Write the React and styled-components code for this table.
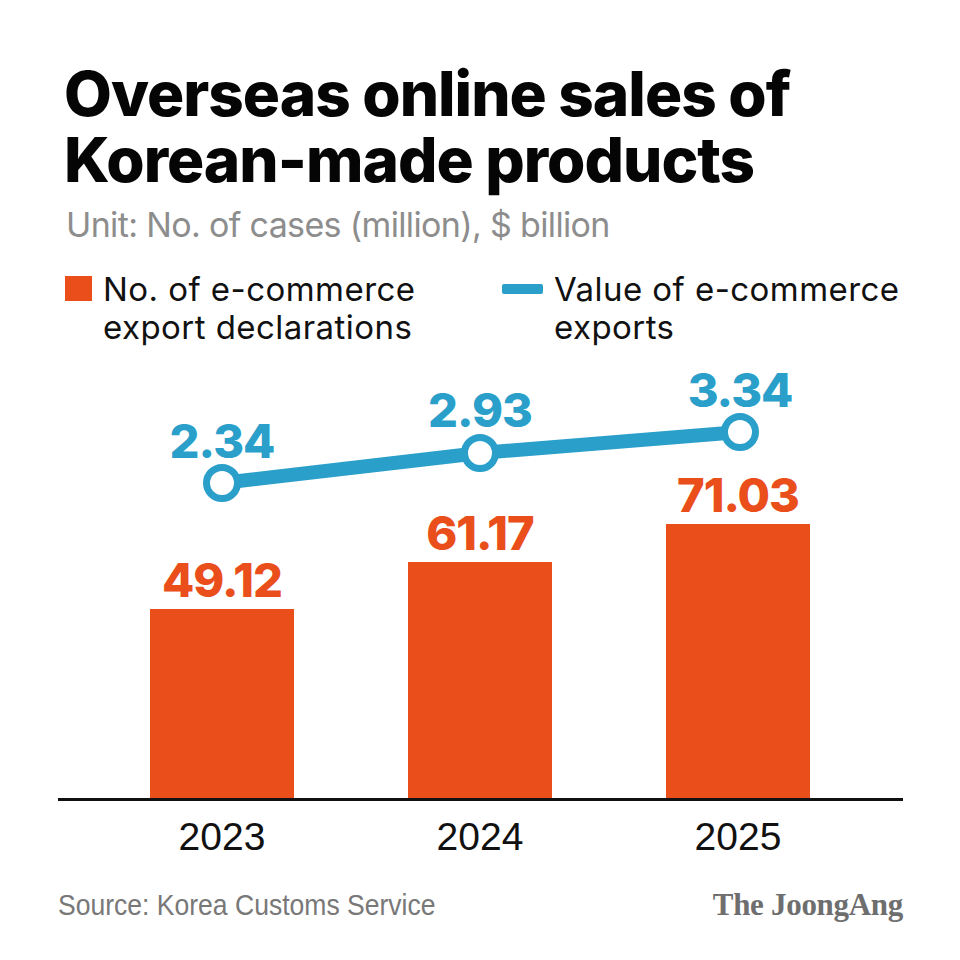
import React from "react";
import styled, { createGlobalStyle } from "styled-components";

const Global = createGlobalStyle`
  html, body { margin: 0; padding: 0; background: #ffffff; }
  #root { width: 960px; height: 960px; }
`;

const ORANGE = "#E94E1B";
const BLUE = "#2A9FCA";

const Page = styled.div`
  width: 960px;
  height: 960px;
  box-sizing: border-box;
  padding: 61px 57px 0 58px;
  background: #fff;
  font-family: Inter, "Liberation Sans", sans-serif;
  overflow: hidden;
`;

const Title = styled.h1`
  margin: 0 0 0 6px;
  font-family: Inter, "Liberation Sans", sans-serif;
  font-weight: 800;
  font-size: 62px;
  line-height: 66px;
  letter-spacing: -1px;
  color: #050505;
`;

const Subtitle = styled.p`
  margin: 12px 0 0 8px;
  font-family: Inter, "Liberation Sans", sans-serif;
  font-weight: 400;
  font-size: 34px;
  line-height: 40px;
  letter-spacing: -0.65px;
  color: #8d8d8d;
`;

const Legend = styled.div`
  display: grid;
  grid-template-columns: 437px 1fr;
  margin: 25px 0 0 7px;
`;

const LegendItem = styled.div`
  display: flex;
  align-items: flex-start;
  gap: 11px;
`;

const Swatch = styled.span`
  flex: none;
  width: ${(p) => (p.$line ? "41px" : "27px")};
  height: ${(p) => (p.$line ? "10px" : "25px")};
  margin-top: ${(p) => (p.$line ? "14px" : "6px")};
  background: ${(p) => p.$color};
  border-radius: ${(p) => (p.$line ? "2px" : "0")};
`;

const LegendText = styled.span`
  font-family: Inter, "Liberation Sans", sans-serif;
  font-size: 33px;
  line-height: 38px;
  letter-spacing: 0.45px;
  color: #111;
`;

const Chart = styled.svg`
  display: block;
  margin-top: 12px;
  width: 845px;
  height: 445px;
  overflow: visible;
`;

const Value = styled.text`
  font-family: Inter, "Liberation Sans", sans-serif;
  font-weight: 800;
  font-size: 47px;
  letter-spacing: -1px;
  text-anchor: middle;
  fill: ${(p) => p.$color};
`;

const Years = styled.div`
  display: flex;
  margin: 12px 0 0 35px;
`;

const Year = styled.span`
  width: 258px;
  text-align: center;
  font-family: "Liberation Sans", Arial, sans-serif;
  font-size: 39px;
  line-height: 44px;
  color: #111;
`;

const Footer = styled.div`
  display: flex;
  justify-content: space-between;
  align-items: baseline;
  margin-top: 29px;
`;

const Source = styled.span`
  display: inline-block;
  font-family: "Liberation Sans", Arial, sans-serif;
  font-size: 29px;
  line-height: 34px;
  color: #787878;
  transform: scaleX(0.915);
  transform-origin: left center;
`;

const Logo = styled.span`
  font-family: "Liberation Serif", "Times New Roman", serif;
  font-weight: 700;
  font-size: 31px;
  line-height: 34px;
  letter-spacing: -0.3px;
  color: #6e6e6e;
`;

const data = [
  { year: "2023", count: "49.12", value: "2.34", barTop: 251, cx: 164, cy: 125, valueY: 100, countY: 239 },
  { year: "2024", count: "61.17", value: "2.93", barTop: 204, cx: 422, cy: 95, valueY: 69, countY: 192 },
  { year: "2025", count: "71.03", value: "3.34", barTop: 166, cx: 682, cy: 74, valueY: 49, countY: 154 },
];

const BAR_W = 144;
const BASE = 442;

export default function App() {
  const barX = [92, 350, 608];
  return (
    <>
      <Global />
      <Page>
        <Title>
          Overseas online sales of
          <br />
          Korean-made products
        </Title>
        <Subtitle>Unit: No. of cases (million), $ billion</Subtitle>
        <Legend>
          <LegendItem>
            <Swatch $color={ORANGE} />
            <LegendText>
              No. of e-commerce
              <br />
              export declarations
            </LegendText>
          </LegendItem>
          <LegendItem>
            <Swatch $line $color={BLUE} />
            <LegendText>
              Value of e-commerce
              <br />
              exports
            </LegendText>
          </LegendItem>
        </Legend>
        <Chart viewBox="0 0 845 445">
          {data.map((d, i) => (
            <g key={d.year}>
              <rect x={barX[i]} y={d.barTop} width={BAR_W} height={BASE - d.barTop} fill={ORANGE} />
              <Value x={barX[i] + BAR_W / 2} y={d.countY} $color={ORANGE}>
                {d.count}
              </Value>
            </g>
          ))}
          <rect x="0" y="440" width="845" height="3" fill="#111" />
          <polyline
            points={data.map((d) => `${d.cx},${d.cy}`).join(" ")}
            fill="none"
            stroke={BLUE}
            strokeWidth="14"
            strokeLinejoin="round"
          />
          {data.map((d) => (
            <g key={d.value}>
              <circle cx={d.cx} cy={d.cy} r="15.5" fill="#fff" stroke={BLUE} strokeWidth="7" />
              <Value x={d.cx} y={d.valueY} $color={BLUE}>
                {d.value}
              </Value>
            </g>
          ))}
        </Chart>
        <Years>
          {data.map((d) => (
            <Year key={d.year}>{d.year}</Year>
          ))}
        </Years>
        <Footer>
          <Source>Source: Korea Customs Service</Source>
          <Logo>The JoongAng</Logo>
        </Footer>
      </Page>
    </>
  );
}
